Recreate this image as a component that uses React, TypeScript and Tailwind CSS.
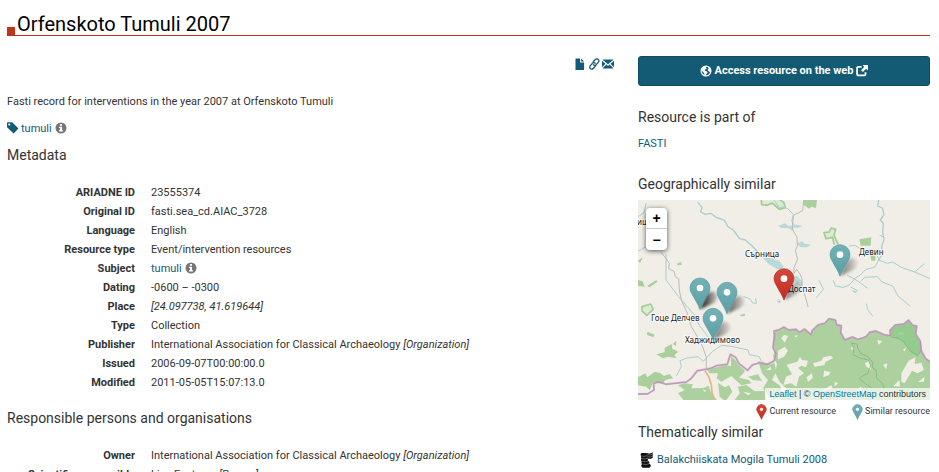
import React from "react";

const FileIcon = () => (
  <svg viewBox="0 0 12 12" className="size-3" fill="currentColor" aria-hidden="true">
    <path d="M1.500 0.500h4.600v4h4v7.500H1.500z" />
    <path d="M7.100 0.500l3 3.100h-3z" />
  </svg>
);

const LinkIcon = () => (
  <svg viewBox="0 0 12 12" className="size-3" fill="none" stroke="currentColor" strokeWidth="1.300" strokeLinecap="round" aria-hidden="true">
    <path d="M5.300 3.700l2-2.200a2 2 0 0 1 3.200.2 2.100 2.100 0 0 1-.1 2.500L8.300 6.700a2 2 0 0 1-2.900.1" />
    <path d="M7.300 8.300l-2 2.200a2 2 0 0 1-3.200-.2 2.100 2.100 0 0 1 .1-2.500L4.300 5.300a2 2 0 0 1 2.900-.1" />
  </svg>
);

const EnvelopeIcon = () => (
  <svg viewBox="0 0 12 12" className="size-3" fill="currentColor" aria-hidden="true">
    <path d="M0.300 1.500h11.400L6 6.300z" />
    <path d="M0 2.800l3.500 3L0 9.200zM12 2.800l-3.500 3L12 9.200z" />
    <path d="M4.300 6.500L6 7.900l1.700-1.400 3.900 4H0.400z" />
  </svg>
);

const TagIcon = () => (
  <svg viewBox="0 0 12 12" className="mb-0.5 size-3" fill="currentColor" aria-hidden="true">
    <path fillRule="evenodd" d="M0 1a.8.8 0 0 1 .8-.8h4.400L11.500 6.500 6.600 11.600 0 5.200zM2.300 1.400a1.100 1.100 0 1 0 0 2.200 1.100 1.100 0 0 0 0-2.200z" />
  </svg>
);

const InfoIcon = () => (
  <svg viewBox="0 0 12 12" className="mb-0.5 size-3" aria-hidden="true">
    <circle cx="6" cy="6" r="5.500" fill="#777" />
    <path d="M5 2h2v1.800H5zM4 4.800h3v3.500h1v1.300H4V8.300h1V6H4z" fill="#fff" />
  </svg>
);

const GlobeIcon = () => (
  <svg viewBox="0 0 12 12" className="size-3" aria-hidden="true">
    <circle cx="6" cy="6" r="4.900" fill="none" stroke="currentColor" strokeWidth="1.200" />
    <path d="M1.500 4.500L3.500 1.500l3-.6-.6 1.500 1 .8-1.800 1.200-.4 1.400 2 .4 1 1.400-1.400 1.600-.6 1.900-1.300-.8-.4-2.300-1.600-1.400z" fill="currentColor" />
    <path d="M8.300 1.400l2.200 2 .7 2.600-.8 2.300-1.200-1.900-1.500-1 .3-1.600 1.200-.6z" fill="currentColor" />
  </svg>
);

const NewWindowIcon = () => (
  <svg viewBox="0 0 12 12" className="size-3" aria-hidden="true">
    <path d="M5.600 1.800H2.400a1.300 1.300 0 0 0-1.300 1.300v6a1.300 1.300 0 0 0 1.300 1.300h5.800a1.300 1.300 0 0 0 1.300-1.300V7.300" fill="none" stroke="currentColor" strokeWidth="1.800" />
    <path d="M6.500 0H12v5.500L10.200 3.700 6.900 7.100 5 5.200l3.300-3.400z" fill="currentColor" />
  </svg>
);

const CoinsIcon = () => (
  <svg viewBox="-4 0 45 48" className="h-4 w-[15px] shrink-0" aria-hidden="true">
    <g fill="#111">
      <rect x="4" y="3" width="20" height="10" rx="4" />
      <rect x="5" y="11" width="20" height="9" rx="4" />
      <rect x="5" y="19" width="21" height="9" rx="4" />
      <rect x="6" y="27" width="24" height="9" rx="4" />
      <rect x="6" y="35" width="28" height="12" rx="5" />
      <path d="M23 3q9 4 17-2v16q-9 6-16 2z" />
    </g>
    <path d="M7 12q9 3 16-1M8 20q9 3 16-1M9 28q9 3 19-1M10 36q9 4 20-1M25 8q8 3 14-2M25 14q8 3 14-2" stroke="#aaa" strokeWidth="1.500" fill="none" />
  </svg>
);

const pinShape = "M0 0C-4-13-17-32-24-46A30 30 0 1 1 24-46C17-32 4-13 0 0Z";

const Pin = ({ red = false }: { red?: boolean }) => (
  <g>
    <path d={pinShape} fill={red ? "url(#pin-red)" : "url(#pin-teal)"} stroke={red ? "#b02c20" : "#4f9aa2"} strokeWidth="2" />
    <circle cx="0" cy="-64" r="10" fill="#fff" />
  </g>
);

const LegendPin = ({ red = false }: { red?: boolean }) => (
  <svg viewBox="-32 -97 64 99" className="h-4 w-[11px]" aria-hidden="true">
    <Pin red={red} />
  </svg>
);

const similarPins = [
  { x: 186, y: 328, shadow: 0.95 },
  { x: 267, y: 341, shadow: 0.65 },
  { x: 225, y: 419, shadow: 0.55 },
  { x: 606, y: 228, shadow: 0.5 },
];

const places = [
  { name: "ищ", x: -1, y: 25 },
  { name: "Сърница", x: 107, y: 57 },
  { name: "Девин", x: 221, y: 55 },
  { name: "Доспат", x: 150, y: 92 },
  { name: "Гоце Делчев", x: 13, y: 121 },
  { name: "Хаджидимово", x: 47, y: 143 },
];

const border =
  "M-4 582L28 582 48 570 47 551 62 545 84 553 145 546 160 535 178 512 203 508 218 505 236 497 268 493 277 463 293 472 303 491 329 511 343 495 365 488 387 493 408 483 414 461 405 443 410 406 408 393 424 389 438 381 452 390 474 388 484 397 500 387 519 404 523 391 541 374 560 370 573 356 592 360 596 374 610 377 608 397 620 420 643 411 660 418 684 410 695 397 713 393 738 404 758 407 756 391 772 375 797 372 812 360 824 376 836 378 833 402 847 424 850 453 862 475 880 488";

const Geography = () => (
  <g transform="scale(0.333333)" fill="none" strokeLinejoin="round" strokeLinecap="round">
    <rect width="880" height="604" fill="#f1eee8" />

    <path fill="#add19e" d="M407 396L424 389 438 381 452 390 474 388 484 397 500 387 519 404 523 391 541 374 560 370 573 356 592 360 596 374 610 377 608 397 620 420 643 411 660 418 684 410 695 397 713 393 738 404 758 407 756 391 772 375 797 372 812 360 824 376 836 378 833 402 847 424 850 453 862 475 880 488V604H400L432 596 446 566 425 545 412 520 417 491 405 470 410 450 405 430Z" />
    <path fill="#add19e" d="M360 483L385 492 410 490 415 515 402 540 425 556 440 590 400 600 375 565 390 540 372 520ZM278 468L292 480 301 494 322 512 300 523 280 510ZM206 508L236 502 266 496 303 503 320 516 303 533 333 540 340 550 310 556 280 528 250 545 236 534 240 520 215 520ZM300 560L325 555 350 574 380 572 385 600 290 600 305 580ZM330 530L360 523 372 543 345 540ZM120 556L140 550 165 553 160 565 195 564 212 557 220 580 240 604H140L120 580 140 570ZM240 548L260 562 273 556 283 575 262 604 245 590Z" />
    <path fill="#a9d09a" d="M0 532L22 520 28 532 50 515 68 520 78 528 95 522 105 535 83 540 73 551 45 548 35 570 24 560 0 556ZM80 443L101 432 103 446 120 455 110 465 115 475 90 470 75 475 55 463 80 457ZM104 432L115 422 114 438ZM498 0H537L534 24 520 20 514 26 497 15ZM664 118L700 112 698 137 668 137ZM0 182L14 172 6 190ZM0 240L14 244 20 260 0 258ZM27 258L55 240 58 245 35 262ZM118 190L130 186 131 195 118 196ZM28 395L50 404 46 412 27 405ZM306 345L322 341 320 348 308 349ZM694 150L724 146 712 158 712 182 700 182ZM640 270L658 276 650 279Z" />
    <path fill="#f1eee8" d="M430 415L438 404 450 408 440 428ZM468 408L480 405 476 412ZM420 452L440 440 450 452 438 470 420 478ZM446 494L478 485 486 470 492 480 510 482 504 502 490 497 480 504 498 520 483 530 475 560 460 550 436 555 444 530 462 523ZM525 490L550 482 556 472 578 467 586 474 562 486 560 495 530 500ZM558 512L578 516 572 526 556 532ZM506 532L522 520 524 534 510 546ZM548 574L580 555 584 568ZM655 572L668 560 676 570 656 592ZM680 490L695 483 699 510 686 500ZM718 420L733 424 722 434ZM735 494L748 490 745 508ZM775 402L785 395 800 398 794 406ZM790 520L812 482 832 472 830 492 850 488 858 510 838 520 822 512 800 550 790 545ZM766 558L784 540 786 560ZM840 546L860 530 858 545ZM640 440L648 446 640 450ZM795 450L806 440 800 454ZM590 545L600 550 590 560ZM316 575L340 580 330 586ZM195 568L205 572 198 576ZM385 510L398 500 400 510Z" />
    <path fill="#8dc98b" fillOpacity=".8" d="M758 407L756 391 772 375 797 372 812 360 824 376 836 378 833 402 847 424 850 453 838 467 820 460 796 424 764 412Z" />
    <path stroke="#7dbb7c" strokeWidth="3" strokeOpacity=".85" d="M758 411L779 414 796 424 812 448 838 467 850 450 847 424M641 430L657 432 660 446 668 460 690 470 704 488 704 504 714 510 716 534 734 552 738 566M641 430L648 444 645 464 665 474 692 480 698 498 692 510 690 520 673 528 665 536 688 556 700 562" />
    <path stroke="#a3cc98" strokeWidth="5" fill="#dcebcf" d="M370 2L371 14 388 16 402 9 424 28 442 23 438 8 427 0M600 132L588 106 593 88 580 84 573 96 558 98 564 116 584 112 588 132M12 320L38 312 46 328 26 346 12 333Z" />

    <g fill="#aad3d3" fillOpacity=".8">
      <path d="M374 174L400 174 425 184 436 198 432 209 415 206 392 192Z" />
      <path d="M464 228L480 229 494 248 490 260 475 252Z" />
      <path d="M420 78L440 70 452 78 475 74 495 78 478 84 465 82 464 94 452 85 430 84ZM477 130L492 124 500 131 519 135 506 142 486 141Z" />
    </g>
    <g stroke="#a9cdd1" strokeWidth="3">
      <path strokeWidth="4" d="M180 8L192 22 188 36 202 43 218 40 234 52 258 60 270 80 286 90 305 116 322 120 340 136 358 154 372 172M722 0L719 18 733 24 738 44 727 60 736 70 734 98 738 118 731 140 733 162 722 180" />
      <path d="M408 0L424 24 434 20 450 26 466 44 461 64 468 74M722 180L748 190 764 186 790 202 830 216 876 236M830 216L858 192M722 180L710 202 684 208 666 226 654 232 634 255 616 262 592 258 586 242M668 244L680 232 718 230 732 246 764 258 780 288 816 318M628 226L648 236 688 264M634 138L650 136 664 144M680 152L704 148 724 178M544 242L556 268 536 292M686 312L688 328 704 348M726 106L738 112M318 290L335 296 344 309 355 310 353 296M84 164L84 240 122 290 168 344 185 378 204 402 226 432M116 526L130 500 126 482 148 474 180 470 196 484 224 454 250 436 285 440 330 450 334 464 364 470 370 484 400 500M0 50L18 38 24 10M0 154L24 140 48 150" />
      <path d="M422 298L427 308 418 304M640 262L658 272" />
    </g>
    <g stroke="#bdb9b5" strokeWidth="3">
      <path d="M70 158L83 174 94 190 92 206 108 214 112 230 122 236 124 270 130 300 148 340 160 380 178 410 194 440 205 472 205 510M497 0L494 32 466 46 463 84 470 100 477 112 478 138 472 152 479 178 468 202 468 220 476 208 486 222 492 236 492 260 502 290 510 320M596 560L584 576" />
    </g>
    <path stroke="#eeb17c" strokeWidth="5" d="M202 514L212 530 220 554 222 578 230 602" />
    <path stroke="#c9a0c6" strokeWidth="6" strokeOpacity=".85" d={border} />
    <path stroke="#9b7d98" strokeWidth="2" strokeOpacity=".6" d={border} />
  </g>
);

const MapView = () => (
  <div className="relative h-[200px] overflow-hidden bg-[#f1eee8]">
    <svg viewBox="0 0 292 200" preserveAspectRatio="xMidYMid slice" className="block size-full" role="img" aria-label="Map of similar resources">
      <defs>
        <linearGradient id="pin-red" x1="0" y1="0" x2="0" y2="1">
          <stop offset="0" stopColor="#d6463a" />
          <stop offset="1" stopColor="#c22d20" />
        </linearGradient>
        <linearGradient id="pin-teal" x1="0" y1="0" x2="0" y2="1">
          <stop offset="0" stopColor="#74b1b7" />
          <stop offset="1" stopColor="#5b9fa6" />
        </linearGradient>
        <linearGradient id="pin-shadow" x1="0" y1="0" x2="1" y2="0">
          <stop offset="0" stopColor="#000" stopOpacity="1" />
          <stop offset="1" stopColor="#000" stopOpacity=".15" />
        </linearGradient>
        <filter id="soft" x="-50%" y="-50%" width="200%" height="200%">
          <feGaussianBlur stdDeviation="5" />
        </filter>
      </defs>
      <Geography />
      <g fontFamily="'Noto Sans', sans-serif" fontSize="8" fill="#222" stroke="#fff" strokeWidth="2" strokeOpacity=".7" paintOrder="stroke">
        {places.map((p) => (
          <text key={p.name} x={p.x} y={p.y}>{p.name}</text>
        ))}
      </g>
      <g transform="scale(0.333333)">
        {[...similarPins, { x: 438, y: 300, shadow: 0.5 }].map((p) => (
          <path key={p.x} transform={`translate(${p.x} ${p.y})`} d="M0 0L18-44Q34-60 48-48Q60-34 40-18Z" fill="url(#pin-shadow)" opacity={p.shadow} filter="url(#soft)" />
        ))}
        {similarPins.map((p) => (
          <g key={p.x} transform={`translate(${p.x} ${p.y})`}><Pin /></g>
        ))}
        <g transform="translate(438 300)"><Pin red /></g>
      </g>
    </svg>
    <div className="absolute left-2 top-2 flex w-[21px] flex-col overflow-hidden rounded-sm bg-white font-['Liberation_Sans',sans-serif] text-sm font-bold leading-5 text-black shadow-[0_1px_5px_rgba(0,0,0,0.65)]">
      <button type="button" aria-label="Zoom in" className="h-[21px] border-b border-[#ccc]">+</button>
      <button type="button" aria-label="Zoom out" className="h-[21px]">−</button>
    </div>
    <div className="absolute bottom-0 right-0 bg-white/70 px-1 font-['Liberation_Sans',sans-serif] text-[9px] leading-3 text-[#333]">
      <a href="#leaflet" className="text-[#0078a8]">Leaflet</a> | © <a href="#osm" className="text-[#0078a8]">OpenStreetMap</a> contributors
    </div>
  </div>
);

const SubjectLink = () => (
  <span className="inline-flex items-center gap-[3px]">
    <a href="#tumuli" className="text-[#135b75]">tumuli</a>
    <InfoIcon />
  </span>
);

const organisation = (
  <>International Association for Classical Archaeology <em>[Organization]</em></>
);

const metadata: [string, React.ReactNode][] = [
  ["ARIADNE ID", "23555374"],
  ["Original ID", "fasti.sea_cd.AIAC_3728"],
  ["Language", "English"],
  ["Resource type", "Event/intervention resources"],
  ["Subject", <SubjectLink />],
  ["Dating", "-0600 – -0300"],
  ["Place", <em>[24.097738, 41.619644]</em>],
  ["Type", "Collection"],
  ["Publisher", organisation],
  ["Issued", "2006-09-07T00:00:00.0"],
  ["Modified", "2011-05-05T15:07:13.0"],
];

const people: [string, React.ReactNode][] = [
  ["Owner", organisation],
  ["Scientific responsible", <>Lisa Fentress <em>[Person]</em></>],
];

const Details = ({ rows }: { rows: [string, React.ReactNode][] }) => (
  <dl className="mt-5 grid grid-cols-[128px_minmax(0,1fr)] gap-x-4 leading-[19px]">
    {rows.map(([term, value]) => (
      <React.Fragment key={term}>
        <dt className="truncate text-right font-bold">{term}</dt>
        <dd>{value}</dd>
      </React.Fragment>
    ))}
  </dl>
);

const Heading = ({ children }: { children: React.ReactNode }) => (
  <h2 className="text-sm leading-4">{children}</h2>
);

export default function App() {
  return (
    <div className="h-screen overflow-hidden bg-white pl-[7px] pr-[9px] font-[Roboto,sans-serif] text-[11px] text-[#333]">
      <header className="flex h-9 items-end border-b border-[#c0341d]">
        <span className="size-2 shrink-0 bg-[#c0341d]" />
        <h1 className="pl-0.5 text-xl leading-[22px] text-black">Orfenskoto Tumuli 2007</h1>
      </header>

      <div className="grid grid-cols-[minmax(0,1fr)_292px] gap-6 pt-5">
        <main>
          <div className="flex justify-end gap-0.5 pt-0.5 text-[#135b75]">
            <a href="#file" aria-label="View source"><FileIcon /></a>
            <a href="#link" aria-label="Permanent link"><LinkIcon /></a>
            <a href="#mail" aria-label="Send by email"><EnvelopeIcon /></a>
          </div>
          <p className="mt-[22px] leading-[19px]">Fasti record for interventions in the year 2007 at Orfenskoto Tumuli</p>
          <div className="mt-2 flex items-center gap-0.5 leading-[19px] text-[#135b75]">
            <TagIcon />
            <SubjectLink />
          </div>
          <div className="pt-[9px]">
            <Heading>Metadata</Heading>
            <Details rows={metadata} />
          </div>
          <div className="pt-[18px]">
            <Heading>Responsible persons and organisations</Heading>
            <Details rows={people} />
          </div>
        </main>

        <aside>
          <a href="#resource" className="flex h-[30px] items-center justify-center gap-[3px] rounded-[3px] border border-[#0f4a60] bg-[#135b75] font-bold text-white">
            <GlobeIcon />
            Access resource on the web
            <NewWindowIcon />
          </a>
          <div className="pt-[23px]">
            <Heading>Resource is part of</Heading>
            <p className="mt-[9px] leading-[19px]"><a href="#fasti" className="text-[#135b75]">FASTI</a></p>
          </div>
          <div className="pt-[23px]">
            <Heading>Geographically similar</Heading>
            <div className="mt-2"><MapView /></div>
            <ul className="flex h-6 items-center justify-end gap-4 text-[9px]">
              <li className="flex items-center gap-0.5"><LegendPin red />Current resource</li>
              <li className="flex items-center gap-0.5"><LegendPin />Similar resource</li>
            </ul>
          </div>
          <Heading>Thematically similar</Heading>
          <a href="#mogila" className="mt-2.5 flex items-center gap-1 leading-[19px] text-[#135b75]">
            <CoinsIcon />
            Balakchiiskata Mogila Tumuli 2008
          </a>
        </aside>
      </div>
    </div>
  );
}
